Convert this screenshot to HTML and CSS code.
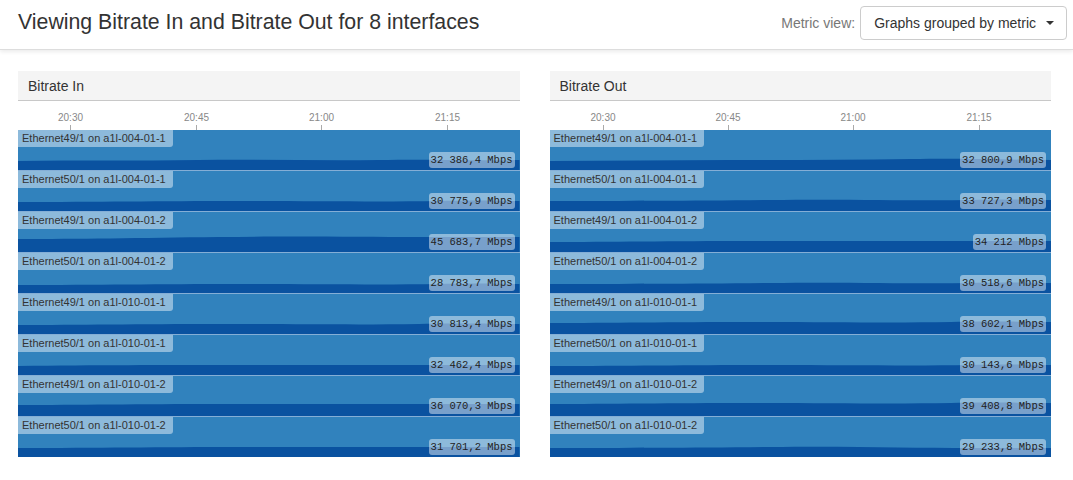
FILE: index.html
```html
<!DOCTYPE html>
<html>
<head>
<meta charset="utf-8">
<link rel="stylesheet" href="styles.css">
</head>
<body>
<header class="topbar">
  <h1 class="title">Viewing Bitrate In and Bitrate Out for 8 interfaces</h1>
  <div class="metric-view">
    <span class="mv-label">Metric view:</span>
    <button class="dropdown">Graphs grouped by metric <span class="caret"></span></button>
  </div>
</header>
<main class="panels">
  <section class="panel">
    <div class="panel-head">Bitrate In</div>
    <div class="axis">
      <div class="tick" style="left:52px"><span>20:30</span></div>
      <div class="tick" style="left:178px"><span>20:45</span></div>
      <div class="tick" style="left:303px"><span>21:00</span></div>
      <div class="tick" style="left:429px"><span>21:15</span></div>
    </div>
    <div class="rows">
      <div class="row"><svg class="chart" viewBox="0 0 500 40" preserveAspectRatio="none"><path d="M0 31 C60 30 120 31 180 30 S300 31 360 30 S460 31 500 30 L500 40 L0 40Z"/></svg><span class="name">Ethernet49/1 on a1l-004-01-1</span><span class="val">32 386,4 Mbps</span></div>
      <div class="row"><svg class="chart" viewBox="0 0 500 40" preserveAspectRatio="none"><path d="M0 31 C80 31 140 30 220 30 S360 31 420 30 S480 30 500 30 L500 40 L0 40Z"/></svg><span class="name">Ethernet50/1 on a1l-004-01-1</span><span class="val">30 775,9 Mbps</span></div>
      <div class="row"><svg class="chart" viewBox="0 0 500 40" preserveAspectRatio="none"><path d="M0 27 C60 27 120 26 200 25 S340 25 400 25 S470 25 500 25 L500 40 L0 40Z"/></svg><span class="name">Ethernet49/1 on a1l-004-01-2</span><span class="val">45 683,7 Mbps</span></div>
      <div class="row"><svg class="chart" viewBox="0 0 500 40" preserveAspectRatio="none"><path d="M0 32 C80 32 140 31 220 31 S360 32 420 31 S480 31 500 31 L500 40 L0 40Z"/></svg><span class="name">Ethernet50/1 on a1l-004-01-2</span><span class="val">28 783,7 Mbps</span></div>
      <div class="row"><svg class="chart" viewBox="0 0 500 40" preserveAspectRatio="none"><path d="M0 31 C60 31 120 30 200 30 S340 31 400 30 S470 30 500 30 L500 40 L0 40Z"/></svg><span class="name">Ethernet49/1 on a1l-010-01-1</span><span class="val">30 813,4 Mbps</span></div>
      <div class="row"><svg class="chart" viewBox="0 0 500 40" preserveAspectRatio="none"><path d="M0 31 C80 30 140 30 220 30 S360 30 420 30 S480 30 500 30 L500 40 L0 40Z"/></svg><span class="name">Ethernet50/1 on a1l-010-01-1</span><span class="val">32 462,4 Mbps</span></div>
      <div class="row"><svg class="chart" viewBox="0 0 500 40" preserveAspectRatio="none"><path d="M0 29 C60 29 120 28 200 28 S340 28 400 28 S470 28 500 28 L500 40 L0 40Z"/></svg><span class="name">Ethernet49/1 on a1l-010-01-2</span><span class="val">36 070,3 Mbps</span></div>
      <div class="row"><svg class="chart" viewBox="0 0 500 40" preserveAspectRatio="none"><path d="M0 31 C80 31 140 30 220 30 S360 30 420 30 S480 30 500 30 L500 40 L0 40Z"/></svg><span class="name">Ethernet50/1 on a1l-010-01-2</span><span class="val">31 701,2 Mbps</span></div>
    </div>
  </section>
  <section class="panel">
    <div class="panel-head">Bitrate Out</div>
    <div class="axis">
      <div class="tick" style="left:53px"><span>20:30</span></div>
      <div class="tick" style="left:178px"><span>20:45</span></div>
      <div class="tick" style="left:303px"><span>21:00</span></div>
      <div class="tick" style="left:429px"><span>21:15</span></div>
    </div>
    <div class="rows">
      <div class="row"><svg class="chart" viewBox="0 0 500 40" preserveAspectRatio="none"><path d="M0 31 C60 31 120 30 180 30 S300 30 360 29 S460 30 500 30 L500 40 L0 40Z"/></svg><span class="name">Ethernet49/1 on a1l-004-01-1</span><span class="val">32 800,9 Mbps</span></div>
      <div class="row"><svg class="chart" viewBox="0 0 500 40" preserveAspectRatio="none"><path d="M0 30 C80 30 140 30 220 29 S360 30 420 29 S480 29 500 29 L500 40 L0 40Z"/></svg><span class="name">Ethernet50/1 on a1l-004-01-1</span><span class="val">33 727,3 Mbps</span></div>
      <div class="row"><svg class="chart" viewBox="0 0 500 40" preserveAspectRatio="none"><path d="M0 30 C60 30 120 29 200 29 S340 29 400 29 S470 29 500 29 L500 40 L0 40Z"/></svg><span class="name">Ethernet49/1 on a1l-004-01-2</span><span class="val">34 212 Mbps</span></div>
      <div class="row"><svg class="chart" viewBox="0 0 500 40" preserveAspectRatio="none"><path d="M0 31 C80 31 140 31 220 30 S360 31 420 30 S480 30 500 30 L500 40 L0 40Z"/></svg><span class="name">Ethernet50/1 on a1l-004-01-2</span><span class="val">30 518,6 Mbps</span></div>
      <div class="row"><svg class="chart" viewBox="0 0 500 40" preserveAspectRatio="none"><path d="M0 29 C60 29 120 28 200 28 S340 29 400 28 S470 28 500 28 L500 40 L0 40Z"/></svg><span class="name">Ethernet49/1 on a1l-010-01-1</span><span class="val">38 602,1 Mbps</span></div>
      <div class="row"><svg class="chart" viewBox="0 0 500 40" preserveAspectRatio="none"><path d="M0 31 C80 31 140 30 220 30 S360 31 420 30 S480 30 500 30 L500 40 L0 40Z"/></svg><span class="name">Ethernet50/1 on a1l-010-01-1</span><span class="val">30 143,6 Mbps</span></div>
      <div class="row"><svg class="chart" viewBox="0 0 500 40" preserveAspectRatio="none"><path d="M0 28 C60 28 120 27 200 27 S340 28 400 27 S470 27 500 27 L500 40 L0 40Z"/></svg><span class="name">Ethernet49/1 on a1l-010-01-2</span><span class="val">39 408,8 Mbps</span></div>
      <div class="row"><svg class="chart" viewBox="0 0 500 40" preserveAspectRatio="none"><path d="M0 31 C80 31 140 31 220 30 S360 31 420 31 S480 31 500 31 L500 40 L0 40Z"/></svg><span class="name">Ethernet50/1 on a1l-010-01-2</span><span class="val">29 233,8 Mbps</span></div>
    </div>
  </section>
</main>
</body>
</html>
```
FILE: styles.css
```css
* { box-sizing: border-box; }
html, body { margin: 0; padding: 0; background: #fff; }
body {
  font-family: "Liberation Sans", Arial, sans-serif;
  color: #333;
  width: 1073px;
  height: 480px;
  overflow: hidden;
}
.topbar {
  height: 50px;
  display: flex;
  align-items: center;
  justify-content: space-between;
  padding: 0 6px 0 18px;
  border-bottom: 1px solid #ddd;
  box-shadow: 0 2px 4px rgba(0,0,0,0.08);
}
.title {
  margin: 0;
  font-size: 21.3px;
  font-weight: normal;
  color: #333;
  margin-top: -5px;
}
.metric-view {
  display: flex;
  align-items: center;
  gap: 5px;
  margin-top: -3px;
}
.mv-label { color: #777; font-size: 14px; }
.dropdown {
  font-family: "Liberation Sans", Arial, sans-serif;
  font-size: 14px;
  color: #333;
  background: #fff;
  border: 1px solid #ccc;
  border-radius: 4px;
  height: 34px;
  padding: 0 12px 0 13px;
  display: flex;
  align-items: center;
  gap: 10px;
}
.caret {
  width: 0; height: 0;
  border-left: 4px solid transparent;
  border-right: 4px solid transparent;
  border-top: 4px solid #333;
}
.panels {
  display: flex;
  gap: 30px;
  padding: 21px 22px 0 18px;
}
.panel { flex: 1; }
.panel-head {
  height: 30px;
  background: #f4f4f4;
  border-bottom: 1px solid #c8c8c8;
  font-size: 14px;
  padding: 7px 10px 0;
  color: #333;
}
.axis {
  position: relative;
  height: 29px;
}
.tick {
  position: absolute;
  bottom: 0;
  width: 1px;
  height: 5px;
  background: #aaa;
}
.tick span {
  position: absolute;
  bottom: 7px;
  left: -40px;
  width: 81px;
  text-align: center;
  font-size: 10px;
  color: #888;
}
.rows {
  display: flex;
  flex-direction: column;
  gap: 1px;
  background: #84aed6;
}
.row {
  position: relative;
  height: 40px;
  background: #3182bd;
}
.chart {
  position: absolute;
  inset: 0;
  width: 100%;
  height: 100%;
  display: block;
}
.chart path { fill: #0a52a0; }
.name {
  position: absolute;
  left: 0; top: 0;
  height: 17px;
  line-height: 17px;
  padding: 0 7px 0 4px;
  font-size: 11px;
  color: #333;
  background: rgba(255,255,255,0.45);
  border-bottom-right-radius: 3px;
}
.val {
  position: absolute;
  right: 5px;
  bottom: 2px;
  height: 16px;
  line-height: 16px;
  padding: 0 2px;
  font-family: "Liberation Mono", "DejaVu Sans Mono", monospace;
  font-size: 10.5px;
  color: #222;
  background: rgba(255,255,255,0.45);
  border-radius: 3px;
}
```
